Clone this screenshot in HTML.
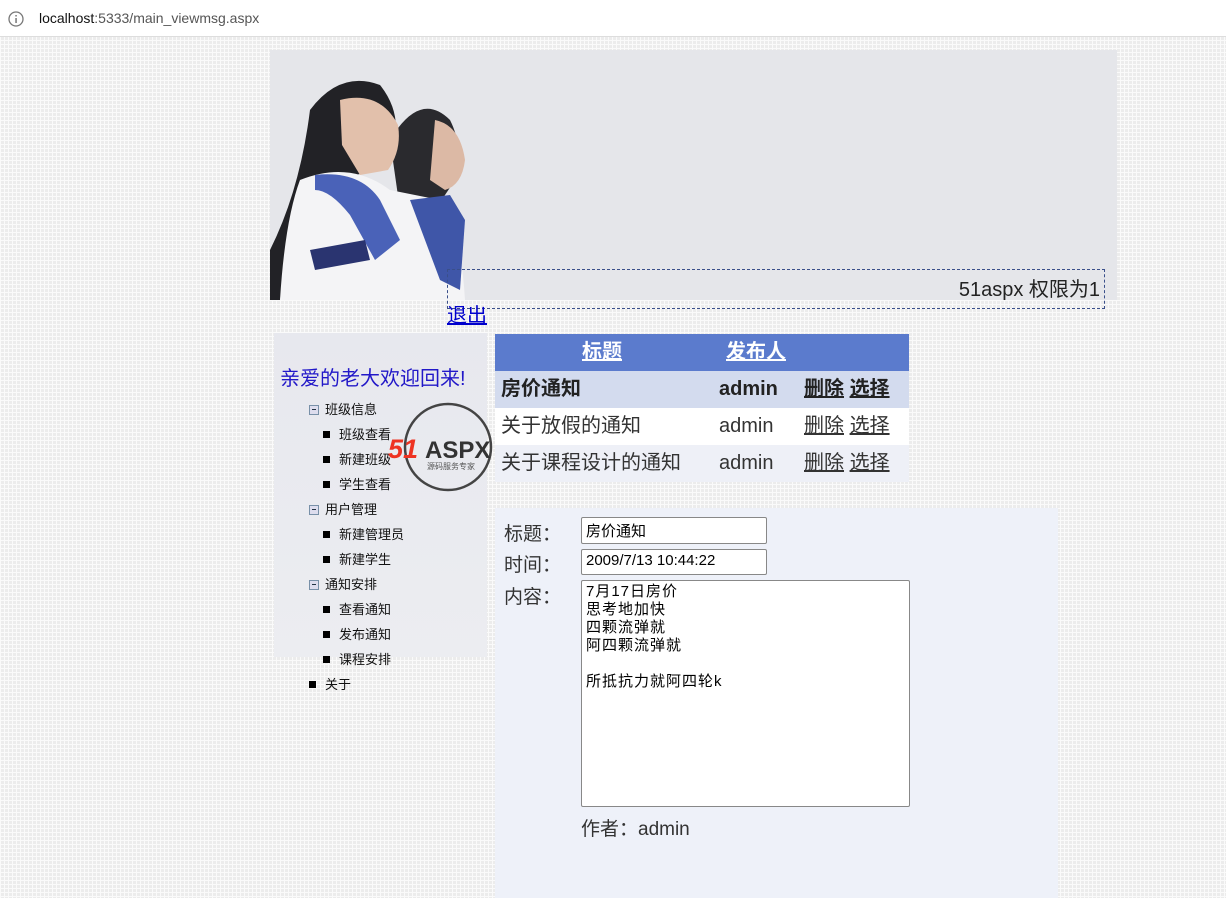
<!DOCTYPE html>
<html><head><meta charset="utf-8"><style>
*{margin:0;padding:0;box-sizing:border-box}
body{width:1226px;height:898px;overflow:hidden;position:relative;font-family:"Liberation Sans","Noto Sans CJK SC",sans-serif;
background-color:#ececec;background-image:linear-gradient(#fafafa 1px,transparent 1px),linear-gradient(90deg,#fafafa 1px,transparent 1px);background-size:4px 4px}
.a{position:absolute}
#bar{left:0;top:0;width:1226px;height:37px;background:#fff;border-bottom:1px solid #ddd}
#bar span{position:absolute;top:10px;font-size:14px}
#hdr{left:270px;top:50px;width:847px;height:250px;background:#e5e6ea}
#name{left:447px;top:269px;width:658px;height:40px;border:1px dashed #3a4f8a;text-align:right;font-size:20px;padding:3px 4px;color:#222}
#out{left:447px;top:299px;font-size:20px;color:#00c;text-decoration:underline}
#left{left:274px;top:333px;width:213px;height:324px;background:linear-gradient(#e7e8ee,#ecedf1)}
.m{position:absolute;font-size:13px;color:#111}
.sq{display:inline-block;width:7px;height:7px;background:#000;margin-right:9px;vertical-align:1px}
.mi{display:inline-block;width:10px;height:10px;border:1px solid #7890a8;background:#dde;margin-right:6px;vertical-align:-1px;position:relative}
.mi:after{content:"";position:absolute;left:2px;top:3px;width:4px;height:1px;background:#234}
table{position:absolute;left:495px;top:334px;width:414px;border-collapse:collapse;font-size:20px;table-layout:fixed}
td{height:37px;padding:0;vertical-align:middle;line-height:37px;white-space:nowrap}
.u{text-decoration:underline}
#form{left:495px;top:508px;width:563px;height:390px;background:#eef1f9}
.lb{position:absolute;font-size:19px;color:#333}
.in{position:absolute;background:#fff;border:1px solid #888;border-radius:2px;font-size:15px;padding:2px 4px;font-family:"Liberation Sans","Noto Sans CJK SC",sans-serif}
</style></head><body>
<div id="bar" class="a"><svg class="a" style="left:8px;top:11px" width="16" height="16"><circle cx="8" cy="8" r="7" fill="none" stroke="#777" stroke-width="1.3"/><rect x="7.3" y="7" width="1.5" height="5" fill="#777"/><rect x="7.3" y="4" width="1.5" height="1.5" fill="#777"/></svg><span style="left:39px;color:#111">localhost<span style="position:static;color:#555">:5333/main_viewmsg.aspx</span></span></div>
<div id="hdr" class="a">
<svg width="200" height="250" style="position:absolute;left:0;top:0">
<path d="M120 90 Q150 40 180 70 Q195 100 185 130 L165 160 L130 160 Z" fill="#2a2a2e"/>
<path d="M165 70 Q190 75 195 110 Q192 135 175 140 L160 130 Z" fill="#dcb9a5"/>
<path d="M40 60 Q70 20 110 35 Q130 60 125 90 L110 120 L60 130 Q20 180 10 250 L0 250 L0 200 Q30 140 40 60Z" fill="#222226"/>
<path d="M70 50 Q110 40 128 75 Q132 100 118 120 L90 125 L72 95Z" fill="#e2c0ab"/>
<path d="M30 130 Q80 110 120 140 L170 150 Q190 170 195 250 L10 250 Q15 170 30 130Z" fill="#f4f4f6"/>
<path d="M45 125 Q90 120 110 150 L130 190 L105 210 L80 165 Q60 140 45 140Z" fill="#4a62b8"/>
<path d="M140 150 L180 145 L195 170 L190 240 L170 230Z" fill="#3f56a8"/>
<path d="M40 200 L95 190 L100 210 L45 220Z" fill="#2a3470"/>
</svg></div>
<div id="name" class="a">51aspx 权限为1</div>
<div id="out" class="a">退出</div>
<div id="left" class="a"></div>
<div class="m" style="left:280px;top:362px;font-size:20px;color:#2218c8">亲爱的老大欢迎回来!</div>
<div class="m" style="left:309px;top:399px"><span class="mi"></span>班级信息</div>
<div class="m" style="left:323px;top:424px"><span class="sq"></span>班级查看</div>
<div class="m" style="left:323px;top:449px"><span class="sq"></span>新建班级</div>
<div class="m" style="left:323px;top:474px"><span class="sq"></span>学生查看</div>
<div class="m" style="left:309px;top:499px"><span class="mi"></span>用户管理</div>
<div class="m" style="left:323px;top:524px"><span class="sq"></span>新建管理员</div>
<div class="m" style="left:323px;top:549px"><span class="sq"></span>新建学生</div>
<div class="m" style="left:309px;top:574px"><span class="mi"></span>通知安排</div>
<div class="m" style="left:323px;top:599px"><span class="sq"></span>查看通知</div>
<div class="m" style="left:323px;top:624px"><span class="sq"></span>发布通知</div>
<div class="m" style="left:323px;top:649px"><span class="sq"></span>课程安排</div>
<div class="m" style="left:309px;top:674px"><span class="sq"></span>关于</div>
<svg class="a" style="left:385px;top:400px" width="130" height="95"><circle cx="63" cy="47" r="43" fill="none" stroke="#444" stroke-width="2.5"/><text x="3" y="58" font-size="27" font-weight="bold" font-style="italic" fill="#e32" font-family="Liberation Sans">51</text><text x="40" y="58" font-size="24" font-weight="bold" fill="#333" font-family="Liberation Sans">ASPX</text><text x="42" y="69" font-size="8" fill="#555" font-family="Noto Sans CJK SC">源码服务专家</text></svg>
<table>
<colgroup><col style="width:224px"><col style="width:85px"><col></colgroup>
<tr style="background:#5b7bcd;color:#fff;font-weight:bold"><td style="text-align:center;padding-right:10px"><span class="u">标题</span></td><td style="padding-left:7px"><span class="u">发布人</span></td><td></td></tr>
<tr style="background:#d3dbee;color:#222;font-weight:bold"><td style="padding-left:6px">房价通知</td><td>admin</td><td><span class="u">删除</span> <span class="u">选择</span></td></tr>
<tr style="background:#fff;color:#333"><td style="padding-left:6px">关于放假的通知</td><td>admin</td><td><span class="u">删除</span> <span class="u">选择</span></td></tr>
<tr style="background:#eef0f7;color:#333"><td style="padding-left:6px">关于课程设计的通知</td><td>admin</td><td><span class="u">删除</span> <span class="u">选择</span></td></tr>
</table>
<div id="form" class="a"></div>
<div class="lb" style="left:504px;top:519px">标题：</div>
<div class="lb" style="left:504px;top:550px">时间：</div>
<div class="lb" style="left:504px;top:582px">内容：</div>
<div class="in" style="left:581px;top:517px;width:186px;height:27px">房价通知</div>
<div class="in" style="left:581px;top:549px;width:186px;height:26px">2009/7/13 10:44:22</div>
<div class="in" style="left:581px;top:580px;width:329px;height:227px;line-height:18px;letter-spacing:1px;padding-top:2px">7月17日房价<br>思考地加快<br>四颗流弹就<br>阿四颗流弹就<br><br>所抵抗力就阿四轮k</div>
<div class="lb" style="left:581px;top:814px">作者：admin</div>
</body></html>
